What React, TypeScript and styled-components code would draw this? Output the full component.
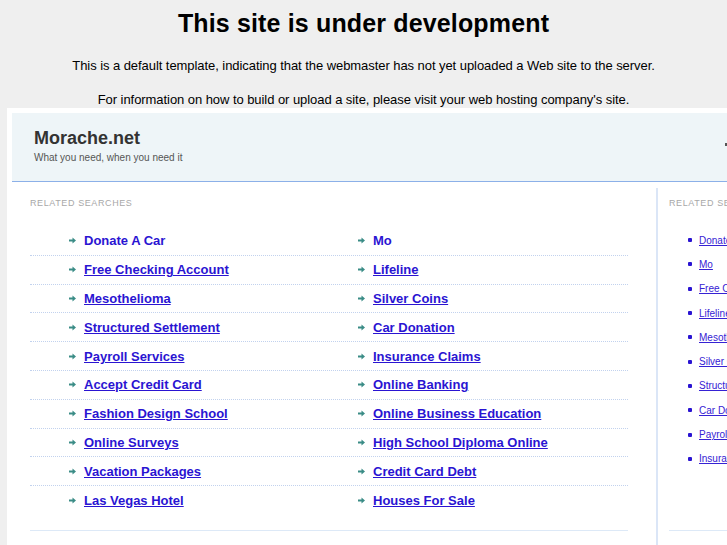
import React from 'react';
import styled, { createGlobalStyle } from 'styled-components';

const mainLinks: [string, string][] = [
  ['Donate A Car', 'Mo'],
  ['Free Checking Account', 'Lifeline'],
  ['Mesothelioma', 'Silver Coins'],
  ['Structured Settlement', 'Car Donation'],
  ['Payroll Services', 'Insurance Claims'],
  ['Accept Credit Card', 'Online Banking'],
  ['Fashion Design School', 'Online Business Education'],
  ['Online Surveys', 'High School Diploma Online'],
  ['Vacation Packages', 'Credit Card Debt'],
  ['Las Vegas Hotel', 'Houses For Sale'],
];

const sideLinks = [
  'Donate A Car',
  'Mo',
  'Free Checking Account',
  'Lifeline',
  'Mesothelioma',
  'Silver Coins',
  'Structured Settlement',
  'Car Donation',
  'Payroll Services',
  'Insurance Claims',
];

const GlobalStyle = createGlobalStyle`
  html, body {
    margin: 0;
    padding: 0;
    background: #efefef;
    font-family: "Liberation Sans", Arial, sans-serif;
    overflow: hidden;
  }
`;

const Intro = styled.div`
  text-align: center;
  color: #000;
`;

const Title = styled.h1`
  margin: 0;
  padding-top: 8px;
  font-size: 25px;
  line-height: 30px;
  font-weight: 700;
  letter-spacing: 0.15px;
`;

const Note = styled.p<{ $top: number }>`
  margin: ${(p) => p.$top}px 0 0;
  font-size: 13px;
  line-height: 16px;
  letter-spacing: -0.06px;
`;

const Panel = styled.div`
  margin: 0 0 0 7px;
  width: 920px;
  background: #fff;
  padding: 5px 0 0 5px;
  height: 460px;
`;

const Header = styled.div`
  height: 68px;
  background: #eef5f8;
  border-bottom: 1px solid #8cb0e8;
  padding-left: 22px;
  display: flex;
  flex-direction: column;
  position: relative;
`;

const SiteName = styled.div`
  margin-top: 15px;
  font-size: 18px;
  line-height: 20px;
  font-weight: 700;
  color: #333;
`;

const Tagline = styled.div`
  margin-top: 4px;
  font-size: 10px;
  line-height: 12px;
  color: #555;
`;

const Edge = styled.span`
  position: absolute;
  left: 713px;
  top: 30px;
  width: 2px;
  height: 3px;
  background: #555;
`;

const Body = styled.div`
  display: flex;
  padding-top: 6px;
`;

const MainCol = styled.div`
  width: 598px;
  margin-left: 18px;
  margin-right: 28px;
  padding-top: 10px;
  border-bottom: 1px solid #dde9f7;
  height: 332px;
`;

const SideCol = styled.div`
  border-left: 2px solid #dbe6f7;
  padding-left: 11px;
  padding-top: 10px;
  width: 260px;
  height: 360px;
`;

const Label = styled.div`
  font-size: 9px;
  line-height: 11px;
  letter-spacing: 0.6px;
  color: #a8a8a8;
  text-transform: uppercase;
`;

const LinkTable = styled.div`
  margin-top: 18px;
`;

const Row = styled.div<{ $last: boolean }>`
  display: grid;
  grid-template-columns: 289px 1fr;
  height: 27.8px;
  border-bottom: ${(p) => (p.$last ? 'none' : '1px dotted #c2d2ee')};
`;

const Cell = styled.div`
  display: flex;
  align-items: center;
  padding-left: 39px;
`;

const MainLink = styled.a<{ $plain: boolean }>`
  margin-left: 8px;
  font-size: 13px;
  font-weight: 700;
  color: #2a14d2;
  text-decoration: ${(p) => (p.$plain ? 'none' : 'underline')};
  cursor: pointer;
`;

const SideList = styled.ul`
  list-style: none;
  margin: 19px 0 0;
  padding: 0 0 0 19px;
  border-bottom: 1px solid #dde9f7;
  height: 302px;
`;

const SideItem = styled.li`
  display: flex;
  align-items: center;
  height: 24.3px;
  white-space: nowrap;
  &::before {
    content: '';
    width: 4px;
    height: 4px;
    border-radius: 1px;
    background: #2a14d2;
    margin-right: 7px;
  }
`;

const SideLink = styled.a`
  font-size: 10px;
  color: #3622d4;
  text-decoration: underline;
  cursor: pointer;
`;

const Arrow = () => (
  <svg width="7" height="7" viewBox="0 0 7 7">
    <path d="M0 2.5h3.5V0.5L7 3.5 3.5 6.5V4.5H0z" fill="#3a8c86" />
  </svg>
);

export default function App() {
  return (
    <>
      <GlobalStyle />
      <Intro>
        <Title>This site is under development</Title>
        <Note $top={20}>
          This is a default template, indicating that the webmaster has not yet uploaded a Web site to the server.
        </Note>
        <Note $top={18}>
          For information on how to build or upload a site, please visit your web hosting company's site.
        </Note>
      </Intro>
      <Panel>
        <Header>
          <SiteName>Morache.net</SiteName>
          <Tagline>What you need, when you need it</Tagline>
          <Edge />
        </Header>
        <Body>
          <MainCol>
            <Label>Related Searches</Label>
            <LinkTable>
              {mainLinks.map((pair, i) => (
                <Row key={pair[0]} $last={i === mainLinks.length - 1}>
                  {pair.map((text) => (
                    <Cell key={text}>
                      <Arrow />
                      <MainLink $plain={i === 0}>{text}</MainLink>
                    </Cell>
                  ))}
                </Row>
              ))}
            </LinkTable>
          </MainCol>
          <SideCol>
            <Label>Related Searches</Label>
            <SideList>
              {sideLinks.map((text) => (
                <SideItem key={text}>
                  <SideLink>{text}</SideLink>
                </SideItem>
              ))}
            </SideList>
          </SideCol>
        </Body>
      </Panel>
    </>
  );
}
